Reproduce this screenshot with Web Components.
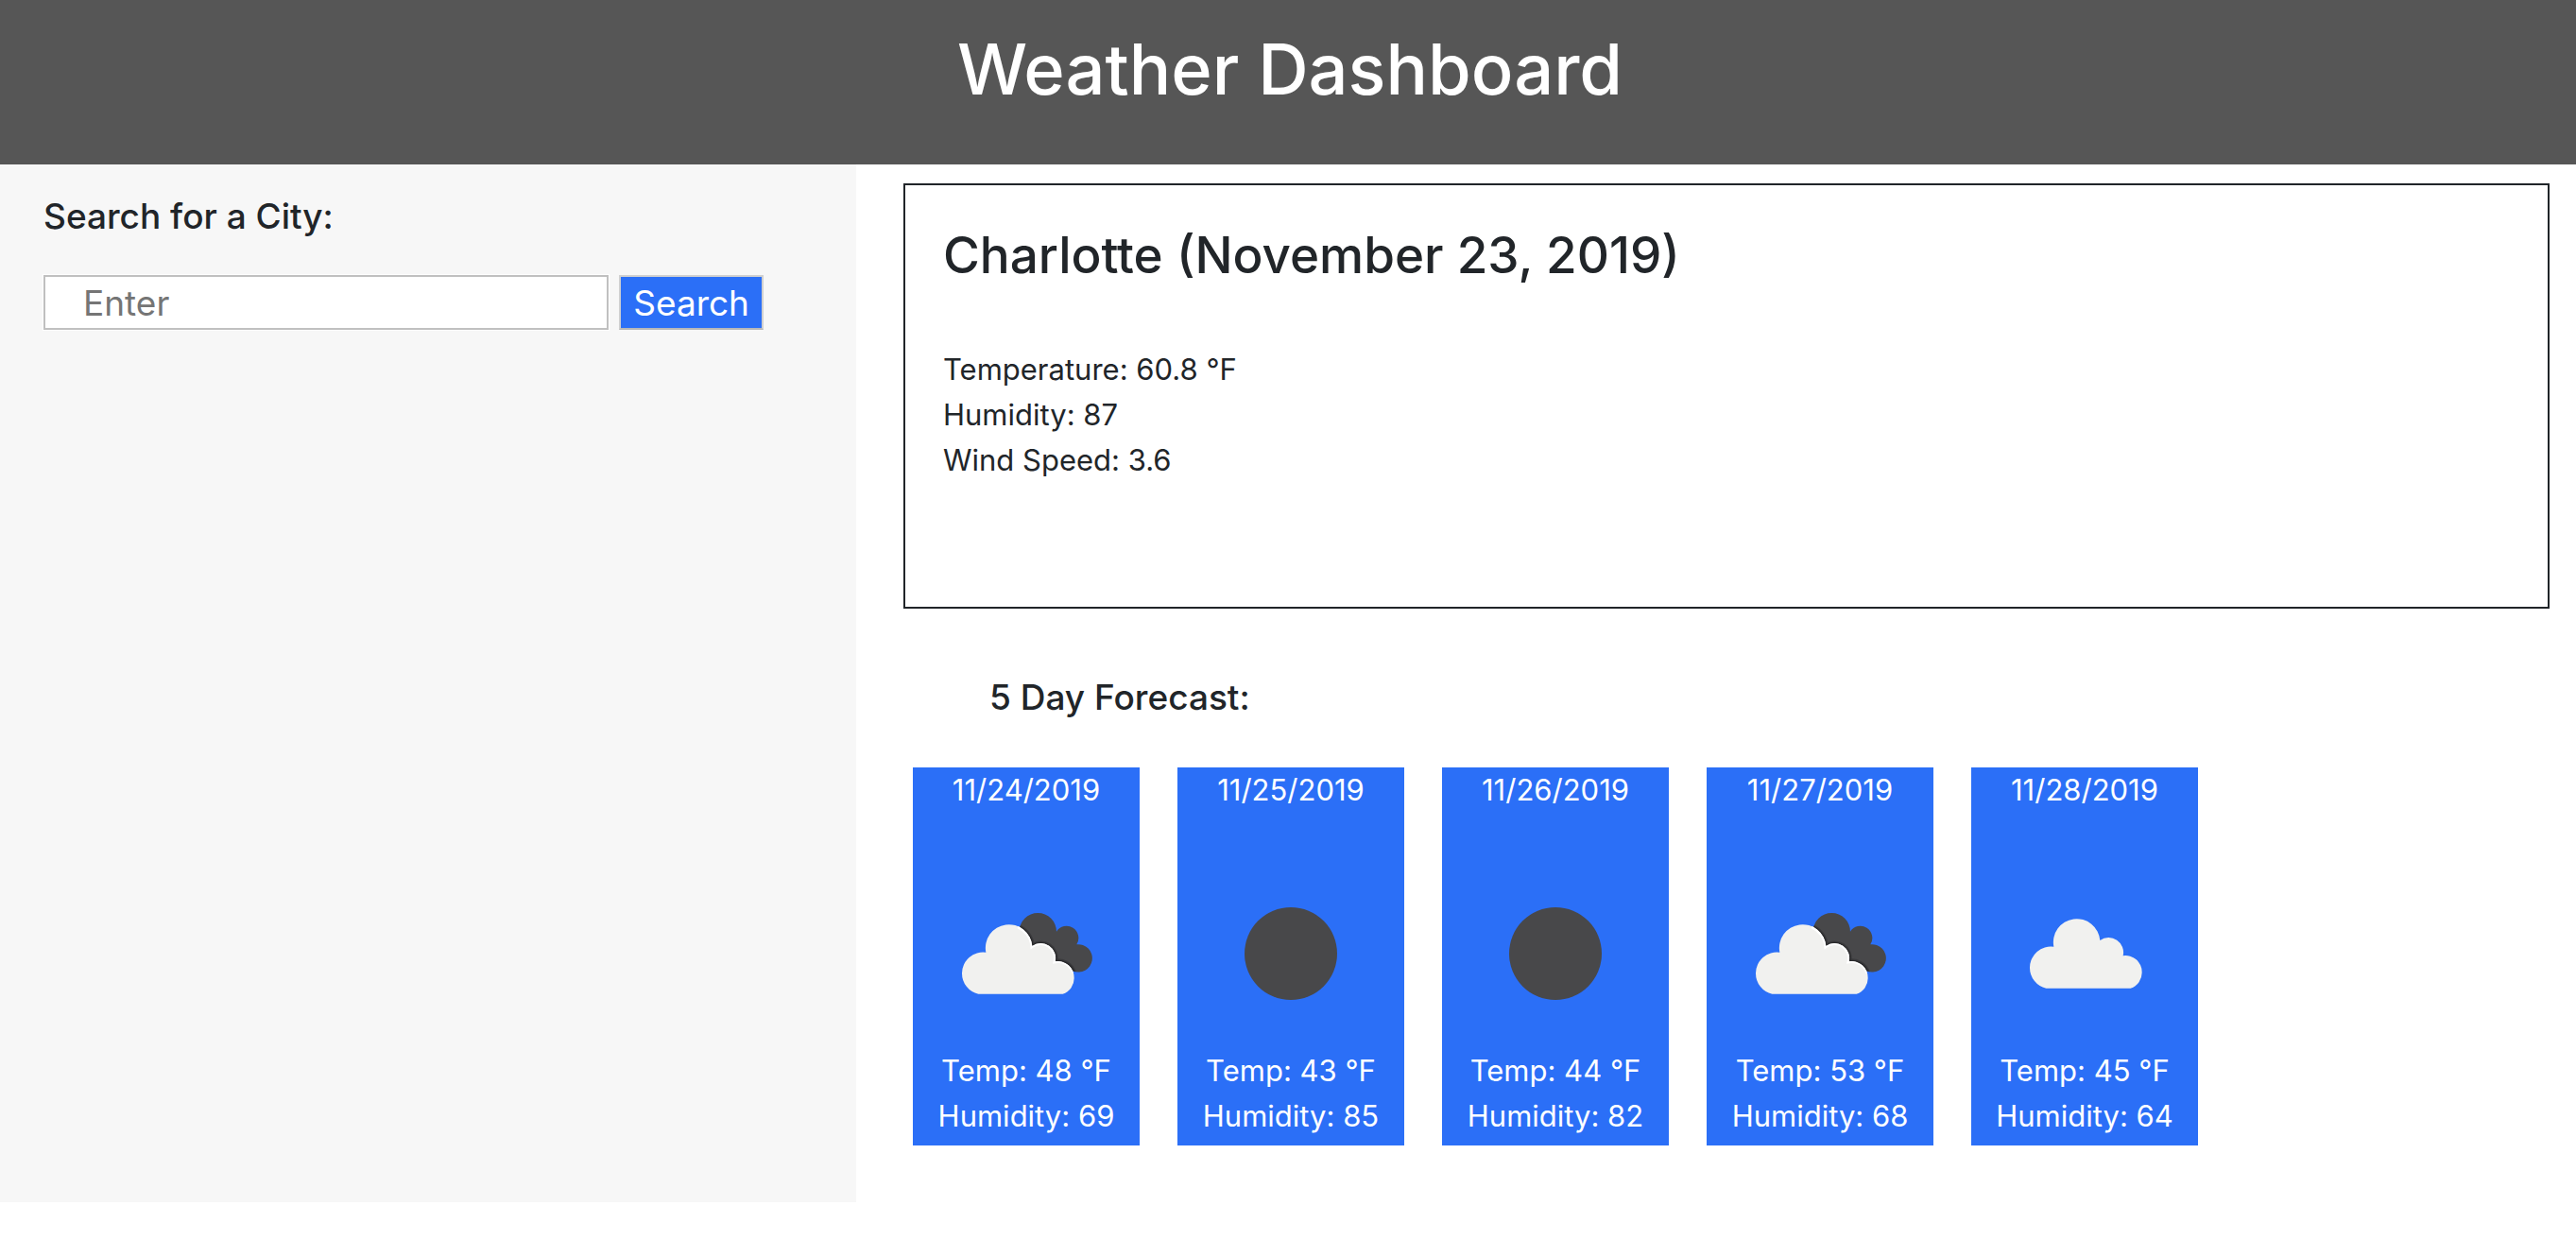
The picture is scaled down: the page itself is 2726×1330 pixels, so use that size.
<!DOCTYPE html>
<html lang="en">
<head>
<meta charset="utf-8">
<title>Weather Dashboard</title>
<style>
  body {
    margin: 0;
    background: #fff;
    color: #212529;
    font-family: Inter, "Liberation Sans", sans-serif;
    --blue: #2b6ff7;
    --ink: #212529;
    --text: 31px;
    --heading: 37px;
    --line: 48px;
  }
</style>
</head>
<body>
<weather-app></weather-app>

<template id="weather-app">
  <style>
    :host { display: flex; flex-direction: column; min-height: 100vh; box-sizing: border-box; padding-bottom: 58px; }
    .columns { flex: 1; display: grid; grid-template-columns: minmax(0, 1fr) minmax(0, 2fr); gap: 8px; }
    main { padding: 20px 28px 0 42px; min-width: 0; }
  </style>
  <app-header>Weather Dashboard</app-header>
  <div class="columns">
    <city-search></city-search>
    <main>
      <current-weather city="Charlotte" date="November 23, 2019" temp="60.8" humidity="87" wind="3.6"></current-weather>
      <forecast-list>
        <span slot="title">5 Day Forecast:</span>
        <forecast-card date="11/24/2019" icon="broken" temp="48" humidity="69"></forecast-card>
        <forecast-card date="11/25/2019" icon="clear" temp="43" humidity="85"></forecast-card>
        <forecast-card date="11/26/2019" icon="clear" temp="44" humidity="82"></forecast-card>
        <forecast-card date="11/27/2019" icon="broken" temp="53" humidity="68"></forecast-card>
        <forecast-card date="11/28/2019" icon="cloud" temp="45" humidity="64"></forecast-card>
      </forecast-list>
    </main>
  </div>
</template>

<template id="app-header">
  <style>
    :host { display: block; background: #565656; color: #fff; padding: 25px 20px 53px 24px; text-align: center; }
    h1 { margin: 0; font-size: 74px; line-height: 96px; font-weight: 500; }
  </style>
  <h1><slot></slot></h1>
</template>

<template id="city-search">
  <style>
    :host { display: block; background: #f7f7f7; padding: 31px 98px 40px 46px; }
    label { display: block; font-size: var(--heading); line-height: var(--line); font-weight: 500; margin-bottom: 38px; }
    .row { display: flex; gap: 11px; }
    input, button { box-sizing: border-box; height: 58px; margin: 0; font: inherit; font-size: var(--heading); border-radius: 0; }
    input { flex: 1; min-width: 0; padding: 0 12px 0 40px; background: #fff; border: 2px solid #c0c0c0; box-shadow: 0 0 0 1px #fff; color: var(--ink); }
    input::placeholder { color: #757575; opacity: 1; }
    button { padding: 0 13px; background: var(--blue); color: #fff; border: 2px solid #d0d0d0; border-bottom-color: #b8b8b8; }
  </style>
  <form onsubmit="return false">
    <label for="city">Search for a City:</label>
    <div class="row">
      <input id="city" type="text" placeholder="Enter">
      <button type="submit">Search</button>
    </div>
  </form>
</template>

<template id="current-weather">
  <style>
    :host { display: block; box-sizing: border-box; min-height: 450px; padding: 40px; border: 2px solid var(--ink); }
    h2 { margin: 0 0 63px; font-size: 53px; line-height: 68px; font-weight: 500; }
    p { margin: 0; font-size: var(--text); line-height: var(--line); }
  </style>
  <h2></h2>
  <p class="temp"></p>
  <p class="humidity"></p>
  <p class="wind"></p>
</template>

<template id="forecast-list">
  <style>
    :host { display: block; padding: 70px 0 40px 10px; }
    h3 { margin: 0 0 50px; padding-left: 81px; font-size: var(--heading); line-height: var(--line); font-weight: 500; }
    .cards { display: flex; flex-wrap: wrap; gap: 40px; }
  </style>
  <h3><slot name="title"></slot></h3>
  <div class="cards"><slot></slot></div>
</template>

<template id="forecast-card">
  <style>
    :host { display: block; box-sizing: border-box; width: 240px; min-height: 400px; background: var(--blue); color: #fff; text-align: center; }
    p { margin: 0; font-size: var(--text); line-height: var(--line); white-space: nowrap; }
    weather-icon { margin: 49px auto 0; }
  </style>
  <p class="date"></p>
  <weather-icon></weather-icon>
  <p class="temp"></p>
  <p class="humidity"></p>
</template>

<script>
  const CLOUD = 'M88 305A67 67 0 0 1 36 239A67 67 0 0 1 112 173A74.3 74.3 0 1 1 259 153A47 47 0 0 1 332 202A52 52 0 0 1 392 254A52 52 0 0 1 356 305Z';
  const DARK = 'M218 107A59 59 0 0 1 336 107A38 38 0 0 1 400 148A44 44 0 1 1 388 232L250 200Z';
  const EDGE = 'M214 91A74.3 74.3 0 0 1 259 153A47 47 0 0 1 332 202A52 52 0 0 1 391 238';
  const ICONS = {
    clear: '<circle cx="100" cy="100" r="49" fill="#48484a"/>',
    cloud: `<g transform="translate(30 35) scale(.3333)"><path d="${CLOUD}" fill="#f1f1ef"/></g>`,
    broken: `<defs><clipPath id="dark"><path d="${DARK}"/></clipPath><clipPath id="light"><path d="${CLOUD}"/></clipPath></defs>
      <g transform="translate(20 41) scale(.3333)" fill="none">
        <path d="${DARK}" fill="#48484a"/>
        <path d="${EDGE}" stroke="#3a3a3c" stroke-width="16" clip-path="url(#dark)"/>
        <path d="${EDGE}" stroke="#2a2a2c" stroke-width="8" clip-path="url(#dark)"/>
        <path d="${CLOUD}" fill="#f1f1ef"/>
        <path d="${EDGE}" stroke="#fff" stroke-width="12" clip-path="url(#light)"/>
      </g>`
  };

  class Base extends HTMLElement {
    connectedCallback() {
      if (this.shadowRoot) return;
      const root = this.attachShadow({ mode: 'open' });
      root.append(document.getElementById(this.localName).content.cloneNode(true));
      this.fill(root);
    }
    fill() {}
    get(name) { return this.getAttribute(name); }
  }

  customElements.define('weather-icon', class extends HTMLElement {
    static observedAttributes = ['name'];
    constructor() { super(); this.attachShadow({ mode: 'open' }); }
    attributeChangedCallback() {
      this.shadowRoot.innerHTML = `<style>:host{display:block;width:200px;height:200px}svg{display:block}</style>
        <svg width="200" height="200" viewBox="0 0 200 200" aria-hidden="true">${ICONS[this.getAttribute('name')]}</svg>`;
    }
  });
  customElements.define('app-header', class extends Base {});
  customElements.define('city-search', class extends Base {});
  customElements.define('forecast-list', class extends Base {});
  customElements.define('current-weather', class extends Base {
    fill(root) {
      root.querySelector('h2').textContent = `${this.get('city')} (${this.get('date')})`;
      root.querySelector('.temp').textContent = `Temperature: ${this.get('temp')} °F`;
      root.querySelector('.humidity').textContent = `Humidity: ${this.get('humidity')}`;
      root.querySelector('.wind').textContent = `Wind Speed: ${this.get('wind')}`;
    }
  });
  customElements.define('forecast-card', class extends Base {
    fill(root) {
      root.querySelector('.date').textContent = this.get('date');
      root.querySelector('weather-icon').setAttribute('name', this.get('icon'));
      root.querySelector('.temp').textContent = `Temp: ${this.get('temp')} °F`;
      root.querySelector('.humidity').textContent = `Humidity: ${this.get('humidity')}`;
    }
  });
  customElements.define('weather-app', class extends Base {});
</script>
</body>
</html>
